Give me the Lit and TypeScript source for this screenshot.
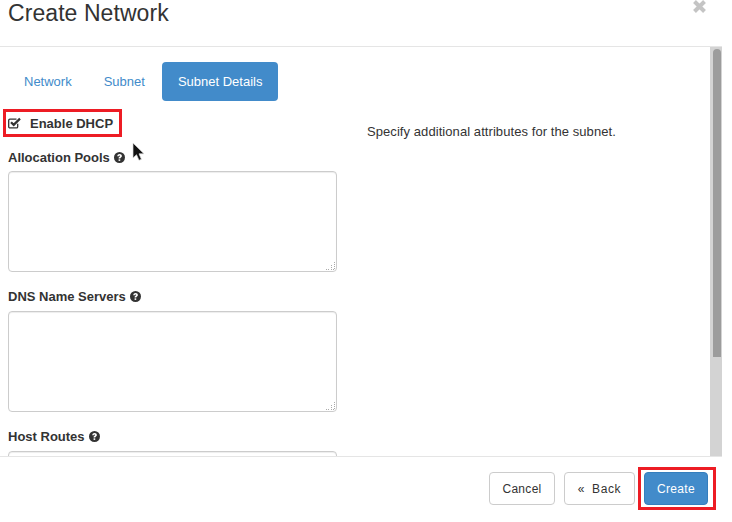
import { LitElement, html, css } from "lit";
import { customElement } from "lit/decorators.js";

const help = html`<svg class="help" viewBox="0 0 12 12" aria-hidden="true">
  <circle cx="6" cy="6" r="6" fill="#333"></circle>
  <path d="M3.500 4.600C3.700 3.100 4.700 2.300 6.100 2.300c1.500 0 2.500.9 2.500 2.100 0 .9-.5 1.400-1.200 1.800-.5.300-.6.500-.6 1H5c0-.9.200-1.400.9-1.900.5-.3.800-.5.800-.9 0-.4-.3-.6-.7-.6-.5 0-.8.300-.9.900z" fill="#fff"></path>
  <rect x="5" y="8" width="1.800" height="1.700" fill="#fff"></rect>
</svg>`;

const area = html`<div class="area-wrap">
  <textarea class="area"></textarea>
  <svg class="grip" viewBox="0 0 10 10" aria-hidden="true">
    <path d="M8 1h1v1H8zM8 3h1v1H8zM5 4h1v1H5zM8 5h1v1H8zM5 6h1v1H5zM8 7h1v1H8zM0 8h1v1H0zM2 8h1v1H2zM5 8h1v1H5zM7 8h1v1H7z" fill="#aaa"></path>
  </svg>
</div>`;

@customElement("app-root")
export class AppRoot extends LitElement {
  static styles = css`
    :host {
      display: block;
      width: 732px;
      height: 522px;
      background: #fff;
      font-family: "Liberation Sans", Arial, sans-serif;
      color: #333;
      font-size: 13px;
      position: relative;
      overflow: hidden;
    }
    .modal {
      width: 722px;
      height: 522px;
      display: flex;
      flex-direction: column;
    }
    .header {
      flex: none;
      box-sizing: border-box;
      border-bottom: 1px solid #e5e5e5;
      display: flex;
      justify-content: space-between;
      align-items: flex-start;
      padding: 0 15px 0 8px;
      height: 47px;
    }
    h4 {
      margin: 0;
      font-size: 23px;
      font-weight: 400;
      line-height: 27px;
      letter-spacing: 0.07px;
    }
    .close {
      width: 15px;
      height: 14px;
      display: block;
    }
    .main {
      flex: none;
      height: 409px;
      display: flex;
      overflow: hidden;
    }
    .content {
      flex: 1;
      min-width: 0;
      padding: 15px 8px 0;
      box-sizing: border-box;
      overflow: hidden;
    }
    .scrollbar {
      flex: none;
      width: 12px;
      background: #d3d3d3;
      box-sizing: border-box;
      padding: 2px 1px 0 3px;
    }
    .thumb {
      height: 308px;
      background: #9c9c9c;
      border-radius: 4px 4px 0 0;
    }
    .tabs {
      display: flex;
      gap: 0;
      margin: 0;
      height: 39px;
    }
    .tab {
      padding: 0 16px;
      line-height: 39px;
      color: #428bca;
      border-radius: 4px;
    }
    .tab.active {
      background: #428bca;
      color: #fff;
      margin-left: 1px;
    }
    .cols {
      display: flex;
      margin-top: 8px;
    }
    .left {
      width: 329px;
      flex: none;
    }
    .right {
      margin-left: 30px;
      padding-top: 15px;
      line-height: 15px;
      letter-spacing: 0.07px;
    }
    .highlight {
      display: inline-flex;
      align-items: center;
      box-sizing: border-box;
      border: 3px solid #ed1c24;
      margin-left: -5px;
      width: 119px;
      height: 28px;
      padding-left: 2px;
      font-weight: 700;
    }
    .check {
      width: 13px;
      height: 12px;
      margin-right: 9px;
      flex: none;
    }
    .label {
      display: flex;
      align-items: center;
      gap: 4px;
      font-weight: 700;
      line-height: 15px;
      margin-bottom: 6px;
    }
    .first {
      margin-top: 13px;
    }
    .next {
      margin-top: 17px;
    }
    .next .label {
      margin-bottom: 7px;
    }
    .help {
      width: 11px;
      height: 11px;
      flex: none;
    }
    .area-wrap {
      position: relative;
      width: 329px;
      height: 101px;
    }
    .area {
      display: block;
      width: 329px;
      height: 101px;
      box-sizing: border-box;
      border: 1px solid #ccc;
      border-radius: 4px;
      box-shadow: inset 0 1px 1px rgba(0, 0, 0, 0.075);
      background: #fff;
      margin: 0;
      padding: 6px 12px;
      font: inherit;
      resize: none;
    }
    .grip {
      position: absolute;
      right: 1px;
      bottom: 1px;
      width: 10px;
      height: 10px;
    }
    .footer {
      flex: none;
      height: 66px;
      box-sizing: border-box;
      border-top: 1px solid #e5e5e5;
      display: flex;
      justify-content: flex-end;
      align-items: flex-start;
      padding: 10px 6px 0 0;
    }
    .btn {
      box-sizing: border-box;
      height: 33px;
      font: inherit;
      font-size: 12px;
      letter-spacing: 0.3px;
      border: 1px solid #ccc;
      border-radius: 4px;
      background: #fff;
      color: #333;
      margin: 5px 0 0 0;
      padding: 0;
      text-align: center;
    }
    .cancel {
      width: 66px;
      margin-right: 9px;
    }
    .back {
      width: 71px;
      margin-right: 3px;
      letter-spacing: 0.6px;
    }
    .back span {
      margin-right: 7px;
    }
    .ring {
      box-sizing: border-box;
      width: 78px;
      height: 43px;
      border: 3px solid #ed1c24;
      padding: 2px 5px 2px 3px;
    }
    .ring .btn {
      width: 64px;
      margin: 0;
      background: #428bca;
      border-color: #357ebd;
      color: #fff;
    }
    .cursor {
      position: absolute;
      left: 132px;
      top: 142px;
      width: 14px;
      height: 21px;
    }
  `;

  render() {
    return html`
      <div class="modal">
        <div class="header">
          <h4>Create Network</h4>
          <svg class="close" viewBox="0 0 15 14" aria-hidden="true">
            <path d="M2.500 1.500 12.500 11.500M12.500 1.500 2.500 11.500" fill="none" stroke="#c4c4c4" stroke-width="4"></path>
          </svg>
        </div>
        <div class="main">
          <div class="content">
            <div class="tabs">
              <div class="tab">Network</div>
              <div class="tab">Subnet</div>
              <div class="tab active">Subnet Details</div>
            </div>
            <div class="cols">
              <div class="left">
                <div class="highlight">
                  <svg class="check" viewBox="0 0 13 12" aria-hidden="true">
                    <path d="M9.700 6.800V9.700A1.200 1.200 0 0 1 8.500 10.900H1.900A1.200 1.200 0 0 1 .7 9.700V3.300A1.200 1.200 0 0 1 1.900 2.100H8.500" fill="none" stroke="#333" stroke-width="1.300"></path>
                    <path d="M3 5.200 5.700 7.900 12 1.600" fill="none" stroke="#333" stroke-width="2.200"></path>
                  </svg>
                  Enable DHCP
                </div>
                <div class="first">
                  <div class="label">Allocation Pools ${help}</div>
                  ${area}
                </div>
                <div class="next">
                  <div class="label">DNS Name Servers ${help}</div>
                  ${area}
                </div>
                <div class="next">
                  <div class="label">Host Routes ${help}</div>
                  ${area}
                </div>
              </div>
              <div class="right">Specify additional attributes for the subnet.</div>
            </div>
          </div>
          <div class="scrollbar"><div class="thumb"></div></div>
        </div>
        <div class="footer">
          <button class="btn cancel">Cancel</button>
          <button class="btn back"><span>«</span>Back</button>
          <div class="ring"><button class="btn">Create</button></div>
        </div>
      </div>
      <svg class="cursor" viewBox="0 0 14 21" aria-hidden="true">
        <path d="M1 1v15l3.500-3.300 2.500 5.600 2.400-1-2.400-5.500H12z" fill="#111" stroke="#ddd" stroke-width="0.700"></path>
      </svg>
    `;
  }
}
